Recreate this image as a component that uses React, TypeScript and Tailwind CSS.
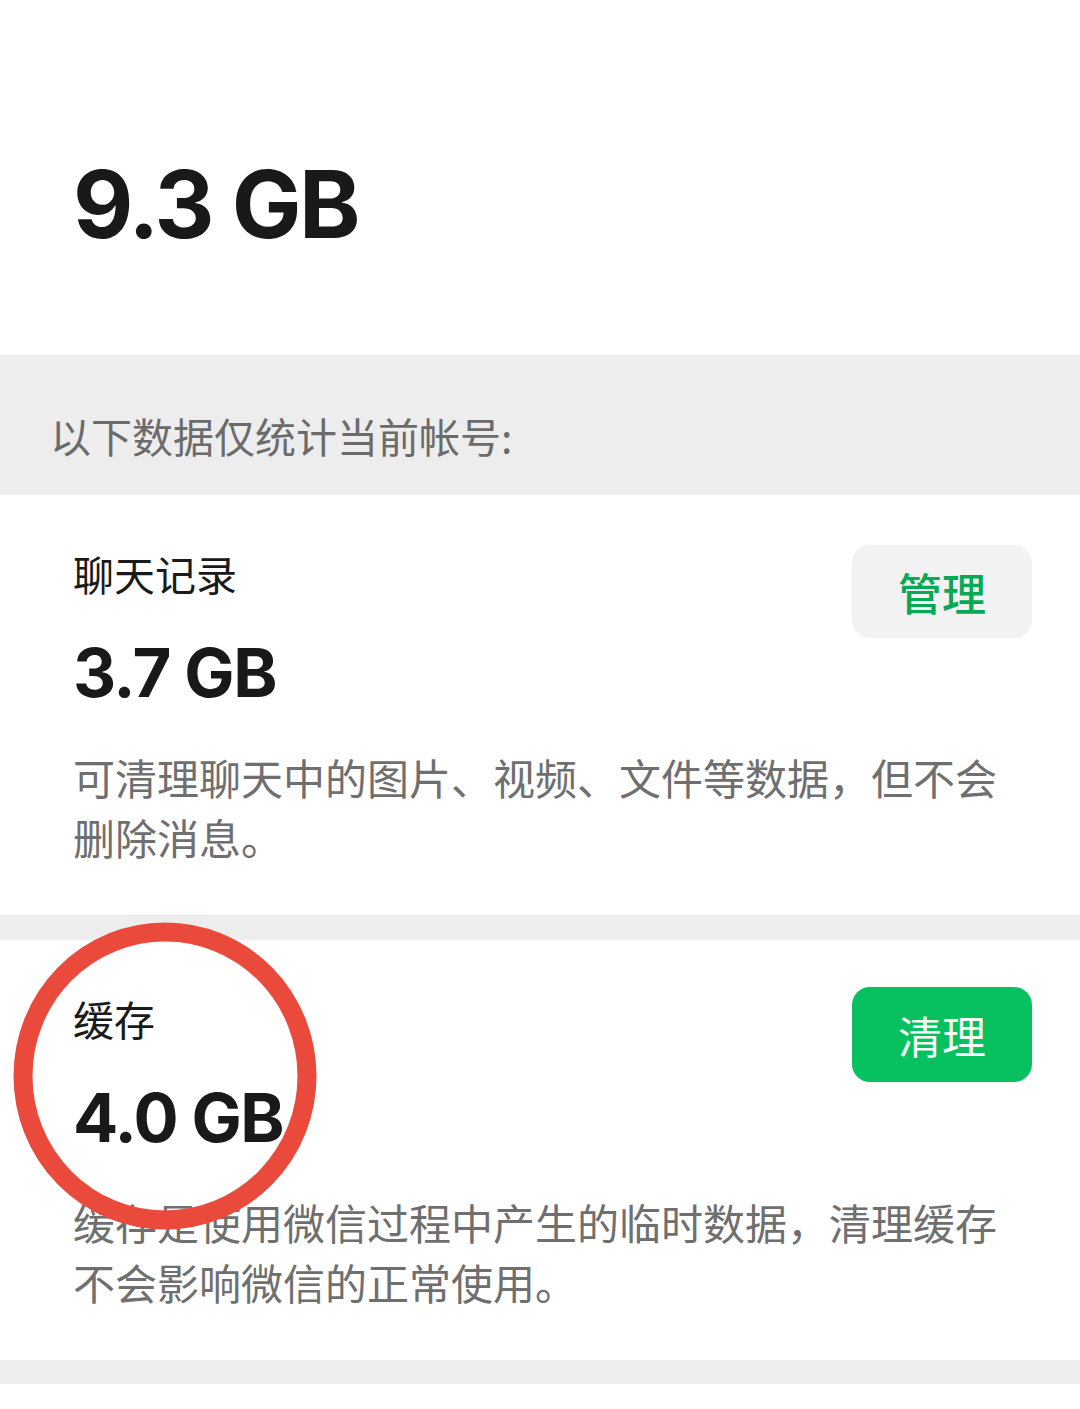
import React from 'react';

const cjk = { fontFamily: '"Noto Sans CJK SC", "Noto Sans", sans-serif' };
const num = { fontFamily: 'Inter, "Noto Sans", sans-serif' };

type Item = {
  title: string;
  size: string;
  desc: string[];
  action: string;
  primary?: boolean;
};

const items: Item[] = [
  {
    title: '聊天记录',
    size: '3.7 GB',
    desc: ['可清理聊天中的图片、视频、文件等数据，但不会', '删除消息。'],
    action: '管理',
  },
  {
    title: '缓存',
    size: '4.0 GB',
    desc: ['缓存是使用微信过程中产生的临时数据，清理缓存', '不会影响微信的正常使用。'],
    action: '清理',
    primary: true,
  },
];

function StorageCard({ item }: { item: Item }) {
  return (
    <div className="bg-white pl-[73px] pr-[48px] pt-[49px] pb-[48px]">
      <div className="flex items-start justify-between">
        <div>
          <div className="text-[41px] leading-[58px] text-[#1a1a1a]" style={cjk}>
            {item.title}
          </div>
          <div
            className="mt-[31px] text-[67px] font-bold leading-[80px] tracking-[-1.5px] text-[#191919]"
            style={num}
          >
            {item.size}
          </div>
        </div>
        <button
          className={
            item.primary
              ? 'mt-[-2px] flex h-[95px] w-[180px] items-center justify-center rounded-[18px] bg-[#07c160] text-[44px] text-[#f4fff8]'
              : 'mt-[1px] flex h-[93px] w-[180px] items-center justify-center rounded-[18px] bg-[#f2f2f2] text-[44px] font-medium text-[#07a957]'
          }
          style={cjk}
        >
          {item.action}
        </button>
      </div>
      <div className="mt-[34px] text-[42px] leading-[60px] text-[#6f6f6f]" style={cjk}>
        {item.desc.map((line) => (
          <div key={line}>{line}</div>
        ))}
      </div>
    </div>
  );
}

export default function App() {
  return (
    <div className="relative min-h-[1409px] w-[1080px] overflow-hidden bg-white">
      {/* Total */}
      <div className="h-[355px] bg-white pl-[73px] pt-[149px]">
        <div
          className="text-[93px] font-bold leading-[110px] tracking-[-2.5px] text-[#191919]"
          style={num}
        >
          9.3 GB
        </div>
      </div>

      <div className="bg-[#ededed] pl-[50px] pt-[51px] pb-[31px]">
        <div className="text-[41px] leading-[58px] text-[#6b6b6b]" style={cjk}>
          以下数据仅统计当前帐号:
        </div>
      </div>

      <StorageCard item={items[0]} />
      <div className="h-[25px] bg-[#ededed]" />
      <StorageCard item={items[1]} />
      <div className="h-[24px] bg-[#ededed]" />

      {/* red annotation circle */}
      <svg
        className="pointer-events-none absolute left-[13px] top-[922px]"
        width="304"
        height="308"
        viewBox="0 0 304 308"
      >
        <ellipse cx="152" cy="154" rx="142" ry="144" fill="none" stroke="#e94a3b" strokeWidth="19" />
      </svg>
    </div>
  );
}
